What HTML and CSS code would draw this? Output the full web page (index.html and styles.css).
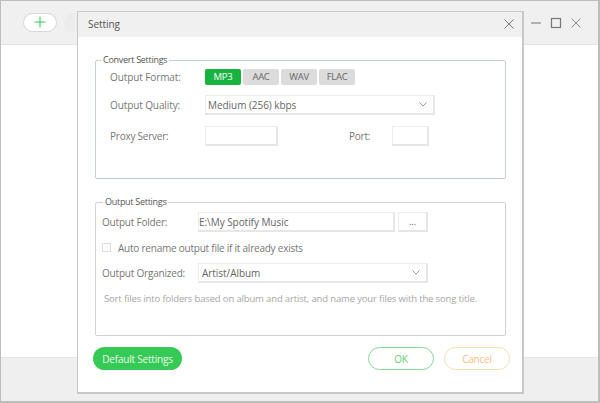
FILE: index.html
```html
<!DOCTYPE html>
<html lang="en">
<head>
<meta charset="utf-8">
<title>Setting</title>
<link rel="stylesheet" href="styles.css">
</head>
<body>
<div class="app">
  <header class="app-bar">
    <div class="bar-left">
      <button class="add-btn" aria-label="Add">
        <svg width="14" height="14" viewBox="0 0 14 14"><path d="M7 1.5v11M1.5 7h11" stroke="#35c653" stroke-width="1" fill="none"/></svg>
      </button>
      <span class="ghost-btn"></span>
    </div>
    <div class="win-controls">
      <svg width="12" height="12" viewBox="0 0 12 12"><path d="M1 6h10" stroke="#8a8a8a" stroke-width="1.2"/></svg>
      <svg width="12" height="12" viewBox="0 0 12 12"><rect x="1.5" y="1.5" width="9" height="9" stroke="#777" stroke-width="1.2" fill="none"/></svg>
      <svg width="12" height="12" viewBox="0 0 12 12"><path d="M1.5 1.5l9 9M10.5 1.5l-9 9" stroke="#8a8a8a" stroke-width="1" fill="none"/></svg>
    </div>
  </header>
  <main class="app-body"></main>
  <footer class="app-foot"></footer>

  <section class="dialog">
    <div class="dialog-title">
      <span>Setting</span>
      <svg width="12" height="12" viewBox="0 0 12 12"><path d="M1.5 1.5l9 9M10.5 1.5l-9 9" stroke="#777" stroke-width="1" fill="none"/></svg>
    </div>
    <div class="dialog-body">
      <fieldset class="group group-convert">
        <legend class="legend-convert">Convert Settings</legend>
        <div class="row row-format">
          <label class="lbl lbl-wide">Output Format:</label>
          <div class="formats">
            <span class="fmt fmt-on">MP3</span>
            <span class="fmt">AAC</span>
            <span class="fmt">WAV</span>
            <span class="fmt">FLAC</span>
          </div>
        </div>
        <div class="row row-quality">
          <label class="lbl lbl-wide">Output Quality:</label>
          <div class="select select-quality">
            <span>Medium (256) kbps</span>
            <svg width="8" height="5" viewBox="0 0 8 5"><path d="M.5 .5L4 4 7.500 .5" stroke="#999" fill="none"/></svg>
          </div>
        </div>
        <div class="row row-proxy">
          <label class="lbl lbl-wide lbl-proxy">Proxy Server:</label>
          <div class="input input-proxy"></div>
          <label class="lbl lbl-port">Port:</label>
          <div class="input input-port"></div>
        </div>
      </fieldset>

      <fieldset class="group group-output">
        <legend class="legend-output">Output Settings</legend>
        <div class="row row-folder">
          <label class="lbl lbl-out">Output Folder:</label>
          <div class="input input-folder">E:\My Spotify Music</div>
          <div class="input browse">...</div>
        </div>
        <div class="row row-check">
          <span class="check"></span>
          <span class="check-text">Auto rename output file if it already exists</span>
        </div>
        <div class="row row-organized">
          <label class="lbl lbl-out">Output Organized:</label>
          <div class="select select-organized">
            <span>Artist/Album</span>
            <svg width="8" height="5" viewBox="0 0 8 5"><path d="M.5 .5L4 4 7.500 .5" stroke="#999" fill="none"/></svg>
          </div>
        </div>
        <p class="hint">Sort files into folders based on album and artist, and name your files with the song title.</p>
      </fieldset>

      <div class="actions">
        <button class="btn btn-default">Default Settings</button>
        <div class="actions-right">
          <button class="btn btn-ok">OK</button>
          <button class="btn btn-cancel">Cancel</button>
        </div>
      </div>
    </div>
  </section>
</div>
</body>
</html>
```

FILE: styles.css
```css
* { box-sizing: border-box; }
html, body { margin: 0; padding: 0; }
body {
  width: 600px;
  height: 403px;
  overflow: hidden;
  font-family: "Open Sans", "Noto Sans", sans-serif;
  font-size: 10px;
  color: #666;
  background: #fff;
}
.app {
  position: relative;
  width: 600px;
  height: 403px;
  display: flex;
  flex-direction: column;
  border: 1px solid #bdbdbd;
  border-width: 1px 2px 2px 1px;
}
.app-bar {
  height: 44px;
  flex: none;
  display: flex;
  align-items: center;
  justify-content: space-between;
  padding: 0 16px 0 22px;
  background: #f0f0f0;
  border-bottom: 1px solid #e4e4e4;
}
.bar-left { display: flex; align-items: center; gap: 7px; }
.add-btn {
  width: 34px;
  height: 19px;
  display: flex;
  align-items: center;
  justify-content: center;
  padding: 0;
  margin-bottom: 1px;
  background: #fff;
  border: 1px solid #d8d8d8;
  border-radius: 10px;
}
.ghost-btn {
  width: 34px;
  height: 19px;
  margin-bottom: 1px;
  background: #ececec;
  border-radius: 10px;
}
.win-controls {
  display: flex;
  gap: 8px;
}
.app-body { flex: 1; background: #fff; }
.app-foot {
  height: 44px;
  flex: none;
  background: #efefef;
  border-top: 1px solid #e4e4e4;
}
.dialog {
  position: absolute;
  left: 76px;
  top: 10px;
  width: 447px;
  height: 383px;
  display: flex;
  flex-direction: column;
  background: #fff;
  border: 1px solid #c8c8c8;
  border-width: 1px 2px 2px 1px;
}
.dialog-title {
  height: 25px;
  flex: none;
  display: flex;
  align-items: center;
  justify-content: space-between;
  padding: 0 7px 1px 10px;
  background: #f0f0f0;
  font-size: 10px;
  letter-spacing: -0.05px;
  color: #555;
}
.dialog-body {
  flex: 1;
  padding: 17px 16px 0 14px;
  display: flex;
  flex-direction: column;
}
.group {
  margin: 0 0 0 3px;
  padding: 0;
  width: 411px;
  min-width: 0;
  border: 1px solid #c5ced0;
  border-radius: 2px;
}
.group-convert { height: 125px; }
.group-output {
  height: 140px;
  margin-top: 17px;
  border-color: #d0d3d4;
}
legend {
  padding: 0 2px;
  font-size: 9px;
  letter-spacing: -0.28px;
  line-height: 12px;
  color: #555;
}
.legend-convert { margin-left: 5px; }
.legend-output { margin-left: 7px; }
.row {
  display: flex;
  align-items: center;
}
.lbl { color: #777; font-size: 10px; letter-spacing: -0.1px; white-space: nowrap; }
.lbl-wide { width: 109px; padding-left: 14px; flex: none; }
.lbl-proxy, .lbl-port { letter-spacing: -0.23px; }
.lbl-out { width: 102px; padding-left: 6px; flex: none; letter-spacing: -0.2px; }
.row-format { margin-top: 2px; height: 17px; }
.formats { display: flex; gap: 2px; }
.fmt {
  width: 36px;
  height: 16px;
  display: flex;
  align-items: center;
  justify-content: center;
  background: #dcdcdc;
  border-radius: 2px;
  color: #666;
  font-size: 9.5px;
  letter-spacing: -0.3px;
}
.fmt-on { background: #17b33f; color: #fff; }
.input, .select {
  height: 20px;
  background: #fff;
  border: 1px solid #ececec;
  border-bottom: 2px solid #e6e6e6;
  border-right: 2px solid #e6e6e6;
  color: #666;
  font-size: 10px;
  letter-spacing: -0.05px;
}
.select {
  display: flex;
  align-items: center;
  justify-content: space-between;
}
.row-quality { margin-top: 10px; }
.select-quality { width: 230px; padding: 0 6px 0 2px; }
.row-proxy { margin-top: 11px; }
.input-proxy { width: 73px; }
.lbl-port { margin-left: 71px; width: 43px; }
.input-port { width: 37px; }
.row-folder { margin-top: 4px; }
.input-folder {
  width: 197px;
  padding-left: 0;
  display: flex;
  align-items: center;
}
.browse {
  width: 30px;
  margin-left: 3px;
  display: flex;
  align-items: center;
  justify-content: center;
  font-size: 9px;
}
.row-check { margin-top: 8px; height: 15px; padding-left: 6px; }
.check {
  width: 9px;
  height: 9px;
  border: 1px solid #ddd;
  flex: none;
}
.check-text { margin-left: 7px; font-size: 10px; letter-spacing: -0.23px; color: #777; white-space: nowrap; }
.row-organized { margin-top: 8px; }
.select-organized { width: 230px; padding: 0 6px 0 3px; }
.hint {
  margin: 9px 0 0 8px;
  font-size: 9.5px;
  letter-spacing: -0.15px;
  line-height: 14px;
  color: #a6a6a6;
  white-space: nowrap;
}
.actions {
  display: flex;
  align-items: center;
  justify-content: space-between;
  margin-top: 11px;
  padding-left: 1px;
  width: 418px;
}
.actions-right { display: flex; gap: 10px; }
.btn {
  height: 23px;
  padding: 0;
  border-radius: 12px;
  font-family: inherit;
  font-size: 10px;
  letter-spacing: -0.2px;
  background: #fff;
}
.btn-default {
  width: 89px;
  background: #35c955;
  border: none;
  color: #eafbe9;
}
.btn-ok {
  width: 66px;
  border: 1px solid #84dc93;
  color: #5fd274;
}
.btn-cancel {
  width: 66px;
  border: 1px solid #fbdcae;
  color: #fbc079;
}
```
